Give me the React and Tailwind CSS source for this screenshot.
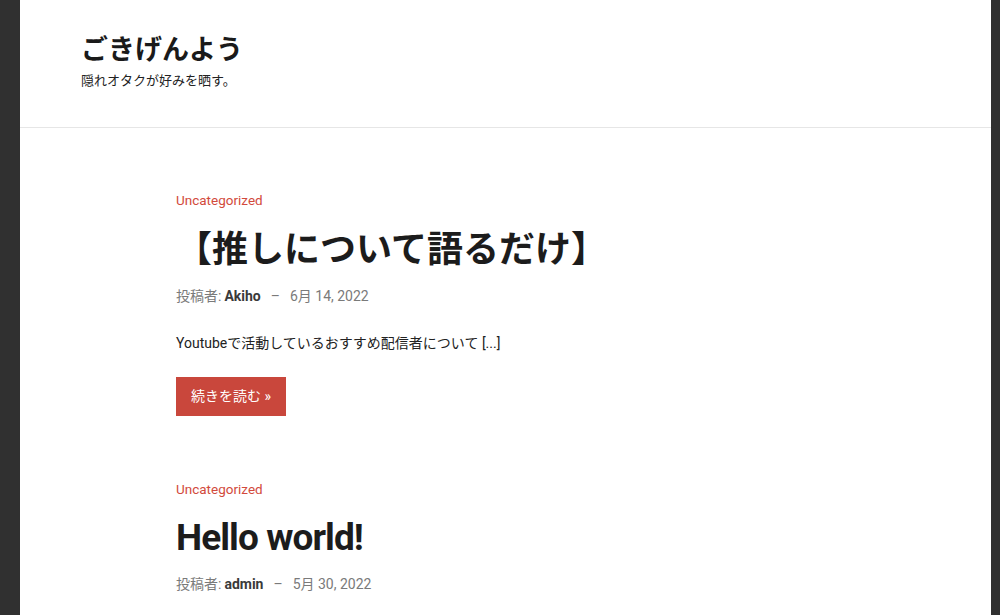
const JP = '"Noto Sans CJK JP", sans-serif';
const LAT = 'Roboto, "Noto Sans CJK JP", sans-serif';

const POSTS = [
  {
    title: '【推しについて語るだけ】',
    jp: true,
    author: 'Akiho',
    date: '6月 14, 2022',
    excerpt: 'Youtubeで活動しているおすすめ配信者について [...]',
  },
  {
    title: 'Hello world!',
    jp: false,
    author: 'admin',
    date: '5月 30, 2022',
  },
];

function Meta({ author, date, className }) {
  return (
    <div className={`flex items-center text-[14px] leading-[20px] text-[#7a7a7a] ${className}`}>
      <span>投稿者:</span>
      <span className="ml-[3px] font-bold text-[#3a3a3a]">{author}</span>
      <span className="mx-[10px]">–</span>
      <span>{date}</span>
    </div>
  );
}

function Post({ post, first }) {
  return (
    <article className={first ? '' : 'mt-[63px]'}>
      <a className="block text-[13.5px] leading-[20px] text-[#d24a3c]">Uncategorized</a>
      {post.jp ? (
        <h2
          className="mt-[15px] text-[36px] leading-[43px] font-bold text-[#1c1c1c]"
          style={{ fontFamily: JP }}
        >
          {post.title}
        </h2>
      ) : (
        <h2 className="mt-[16px] text-[37px] leading-[46px] font-bold tracking-[-0.025em] text-[#1c1c1c]">
          {post.title}
        </h2>
      )}
      <Meta author={post.author} date={post.date} className={post.jp ? 'mt-[18px]' : 'mt-[13px]'} />
      {post.excerpt && (
        <>
          <p className="mt-[27px] text-[14px] leading-[20px] text-[#222]">{post.excerpt}</p>
          <button className="mt-[24px] h-[39px] px-[15px] bg-[#c9473c] text-white text-[14px]">
            続きを読む »
          </button>
        </>
      )}
    </article>
  );
}

export default function App() {
  return (
    <div className="min-h-[615px] bg-[#303030] pl-[20px] pr-[9px]" style={{ fontFamily: LAT }}>
      <div className="min-h-[615px] bg-white">
        <header className="h-[128px] border-b border-[#e6e6e6] pl-[61px] pt-[32px]" style={{ fontFamily: JP }}>
          <h1 className="text-[27px] leading-[32px] font-bold text-[#1a1a1a]">ごきげんよう</h1>
          <p className="mt-[7px] text-[13px] leading-[18px] text-[#222]">隠れオタクが好みを晒す。</p>
        </header>
        <main className="pl-[156px] pt-[62px]">
          {POSTS.map((p, i) => (
            <Post key={p.title} post={p} first={i === 0} />
          ))}
        </main>
      </div>
    </div>
  );
}
